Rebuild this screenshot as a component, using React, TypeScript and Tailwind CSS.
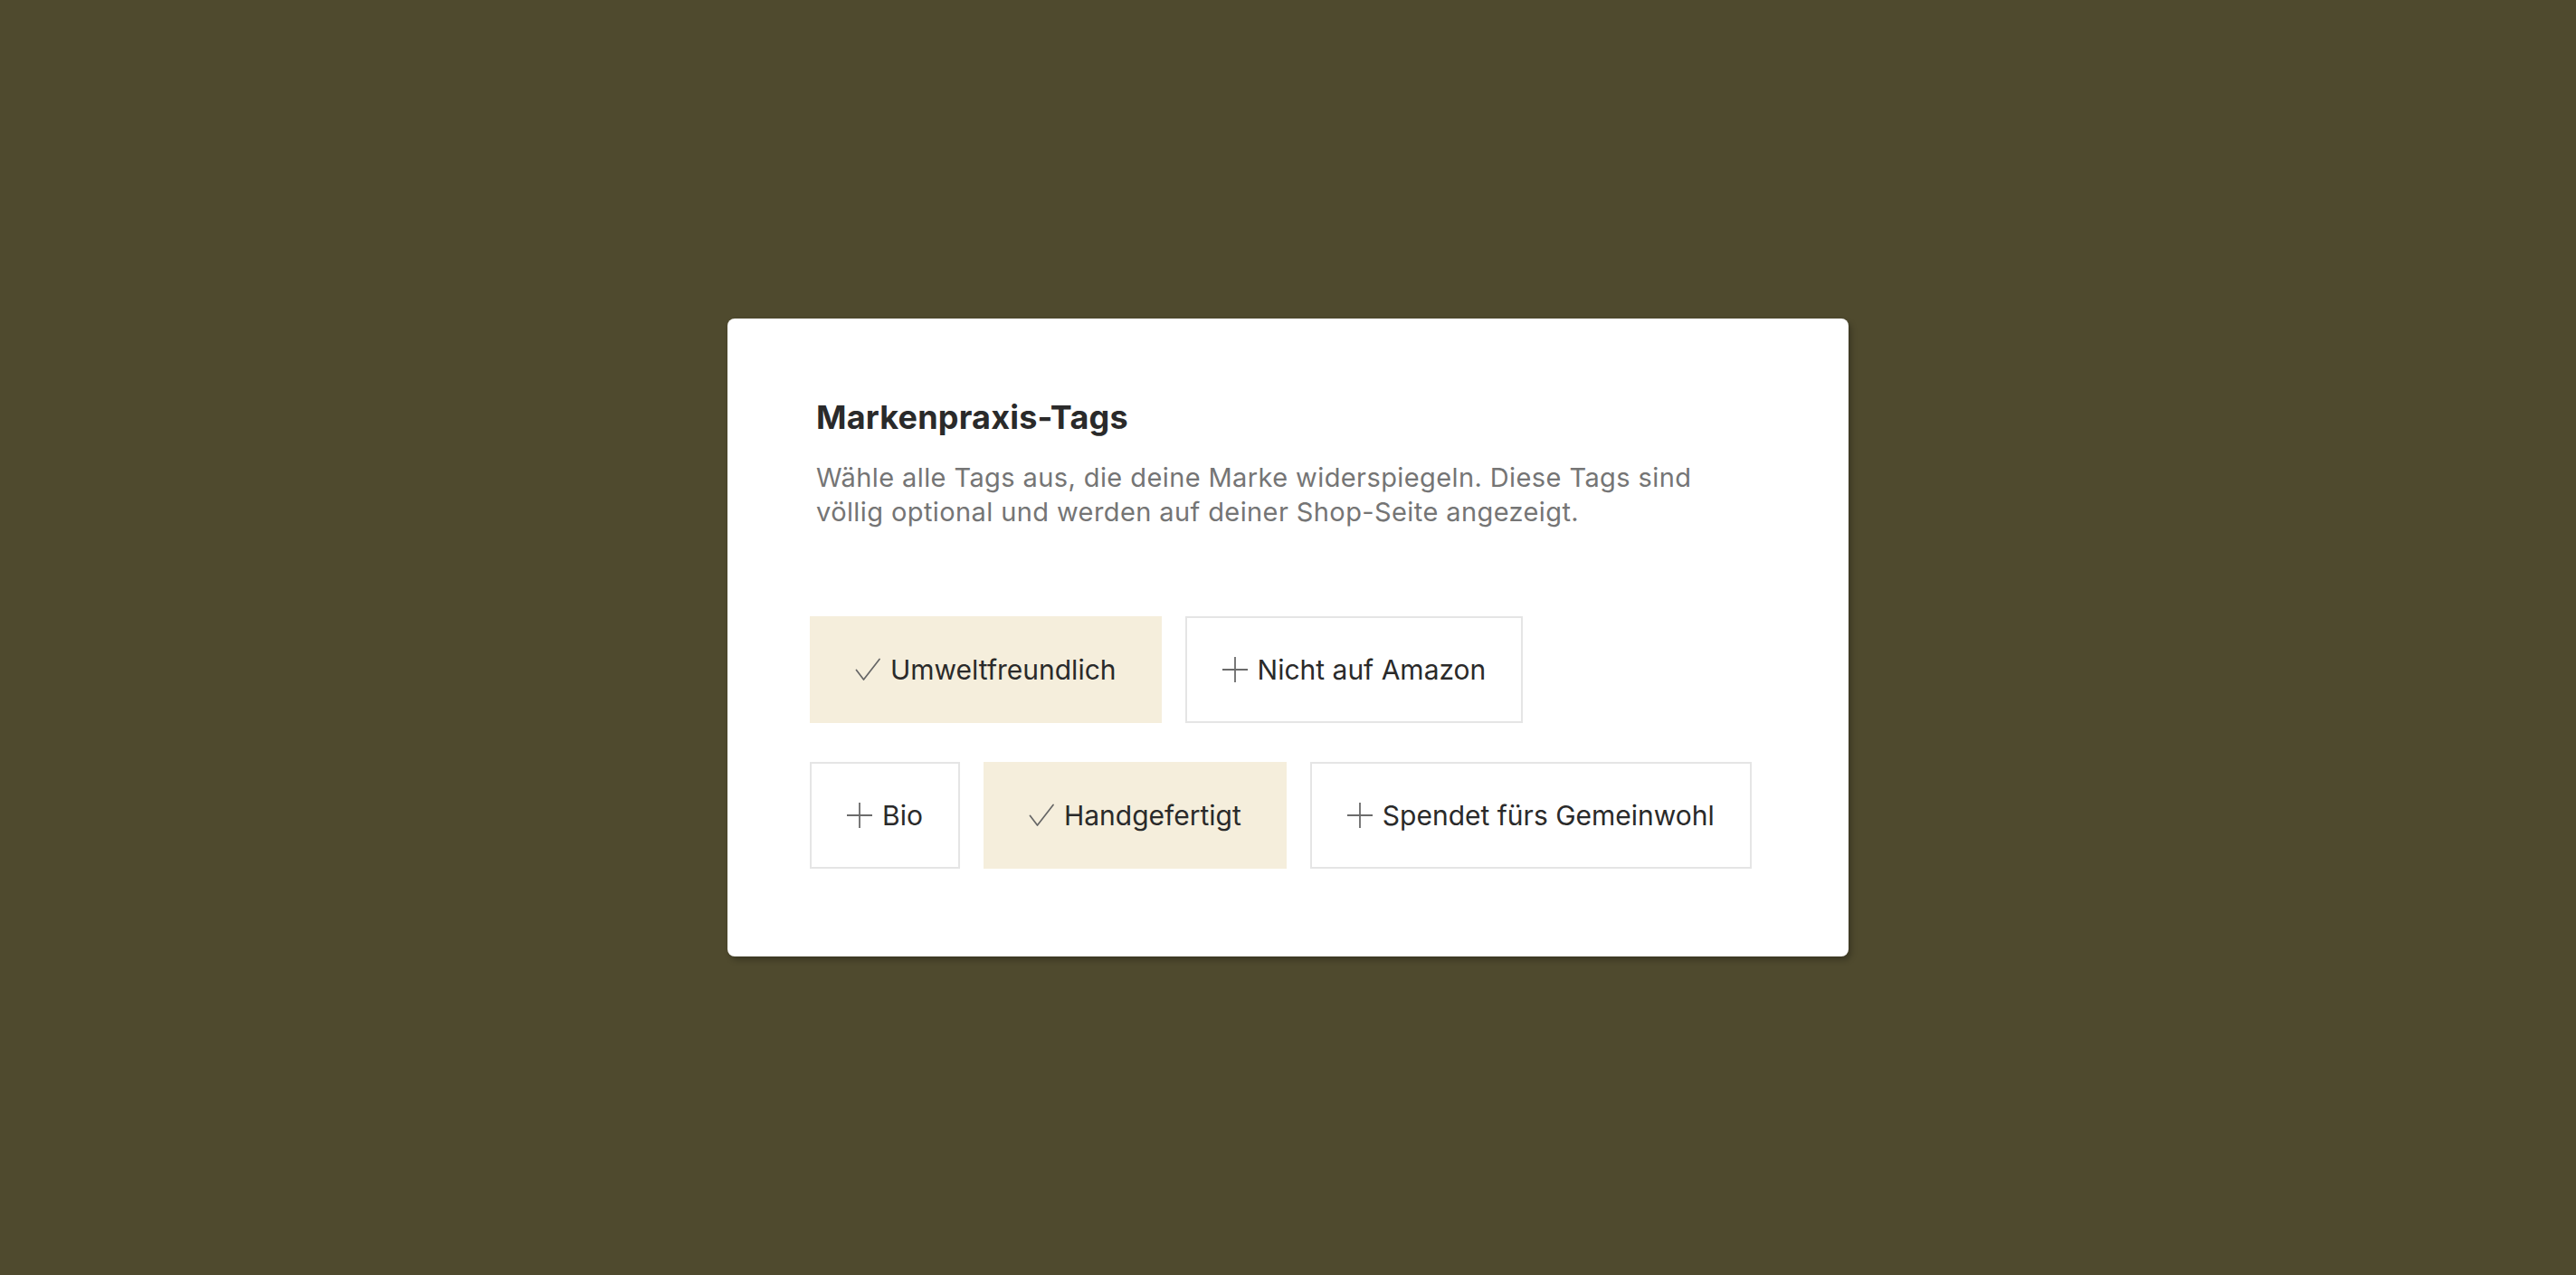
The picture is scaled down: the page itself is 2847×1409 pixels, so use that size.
import { useState } from "react";

type Tag = { label: string; selected: boolean };

const ROWS: Tag[][] = [
  [
    { label: "Umweltfreundlich", selected: true },
    { label: "Nicht auf Amazon", selected: false },
  ],
  [
    { label: "Bio", selected: false },
    { label: "Handgefertigt", selected: true },
    { label: "Spendet fürs Gemeinwohl", selected: false },
  ],
];

function CheckIcon() {
  return (
    <svg width="28" height="26" viewBox="0 0 28 26" fill="none" className="shrink-0">
      <path d="M1.5 13.5 L9.5 24 L27 1.5" stroke="#666666" strokeWidth="1.7" strokeLinecap="round" strokeLinejoin="round" />
    </svg>
  );
}

function PlusIcon() {
  return (
    <svg width="28" height="28" viewBox="0 0 28 28" fill="none" className="shrink-0">
      <path d="M14 0 V28 M0 14 H28" stroke="#6b6b6b" strokeWidth="1.8" />
    </svg>
  );
}

function TagButton({ tag, onToggle }: { tag: Tag; onToggle: () => void }) {
  return (
    <button
      onClick={onToggle}
      className={`flex h-[118px] items-center gap-[11px] border-2 text-[30px] leading-[38px] text-[#2a2a2a] ${
        tag.selected
          ? "bg-[#f5eedc] border-[#f5eedc] px-[48px]"
          : "bg-white border-[#e5e5e5] px-[39px]"
      }`}
    >
      {tag.selected ? <CheckIcon /> : <PlusIcon />}
      <span>{tag.label}</span>
    </button>
  );
}

export default function App() {
  const [rows, setRows] = useState(ROWS);

  const toggle = (r: number, i: number) => {
    setRows((prev) =>
      prev.map((row, ri) =>
        row.map((t, ti) => (ri === r && ti === i ? { ...t, selected: !t.selected } : t))
      )
    );
  };

  return (
    <div
      className="flex min-h-screen items-center justify-center bg-[#4f4a2e]"
      style={{ fontFamily: "Inter, 'Noto Sans', sans-serif" }}
    >
      <div className="w-[1239px] rounded-lg bg-white pl-[98px] pr-[98px] pt-[87px] pb-[97px] shadow-[3px_4px_6px_rgba(0,0,0,0.25)]">
        <h2 className="text-[36px] font-bold leading-[44px] tracking-[0.2px] text-[#2a2a2a]">
          Markenpraxis-Tags
        </h2>
        <p className="mt-[26px] max-w-[1010px] text-[29px] leading-[38px] tracking-[0.4px] text-[#757575]">
          Wähle alle Tags aus, die deine Marke widerspiegeln. Diese Tags sind völlig optional und
          werden auf deiner Shop-Seite angezeigt.
        </p>
        <div className="-ml-[7px] mt-[96px] flex flex-col gap-[43px]">
          {rows.map((row, r) => (
            <div key={r} className="flex gap-[26px]">
              {row.map((tag, i) => (
                <TagButton key={tag.label} tag={tag} onToggle={() => toggle(r, i)} />
              ))}
            </div>
          ))}
        </div>
      </div>
    </div>
  );
}
